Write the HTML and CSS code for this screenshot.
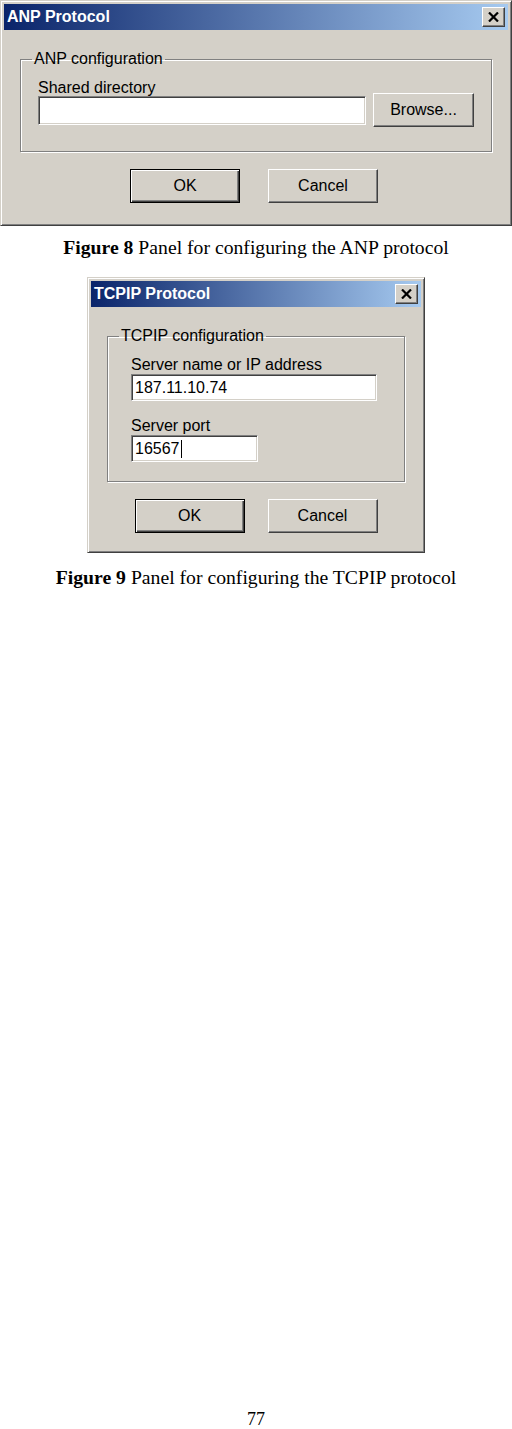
FILE: index.html
```html
<!DOCTYPE html>
<html>
<head>
<meta charset="utf-8">
<link rel="stylesheet" href="styles.css">
</head>
<body>
<div class="page">
  <div class="dialog dlg-anp">
    <div class="titlebar">
      <span class="title">ANP Protocol</span>
      <span class="close"><svg width="11" height="10" viewBox="0 0 11 10"><path d="M1 0.5 L10 9.5 M10 0.5 L1 9.5" stroke="#000" stroke-width="2.2" fill="none"/></svg></span>
    </div>
    <div class="body">
      <fieldset class="group">
        <legend>ANP configuration</legend>
        <div class="group-inner group-anp">
          <div class="label label-dir">Shared directory</div>
          <div class="row">
            <div class="input input-dir"></div>
            <div class="btn btn-browse">Browse...</div>
          </div>
        </div>
      </fieldset>
      <div class="buttons buttons-anp">
        <div class="btn btn-default">OK</div>
        <div class="btn">Cancel</div>
      </div>
    </div>
  </div>
  <p class="caption caption-8"><b>Figure 8</b> Panel for configuring the ANP protocol</p>

  <div class="dialog dlg-tcp">
    <div class="titlebar">
      <span class="title">TCPIP Protocol</span>
      <span class="close"><svg width="11" height="10" viewBox="0 0 11 10"><path d="M1 0.5 L10 9.5 M10 0.5 L1 9.5" stroke="#000" stroke-width="2.2" fill="none"/></svg></span>
    </div>
    <div class="body">
      <fieldset class="group">
        <legend>TCPIP configuration</legend>
        <div class="group-inner group-tcp">
          <div class="label">Server name or IP address</div>
          <div class="input input-host">187.11.10.74</div>
          <div class="label label-port">Server port</div>
          <div class="input input-port">16567<span class="caret"></span></div>
        </div>
      </fieldset>
      <div class="buttons buttons-tcp">
        <div class="btn btn-default">OK</div>
        <div class="btn">Cancel</div>
      </div>
    </div>
  </div>
  <p class="caption caption-9"><b>Figure 9</b> Panel for configuring the TCPIP protocol</p>

  <div class="pagenum">77</div>
</div>
</body>
</html>
```

FILE: styles.css
```css
html, body {
  margin: 0;
  padding: 0;
  background: #fff;
}
.page {
  height: 1429px;
  display: flex;
  flex-direction: column;
  overflow: hidden;
}
.dialog {
  box-sizing: border-box;
  background: #d4d0c8;
  border: 1px solid;
  border-color: #d4d0c8 #404040 #404040 #d4d0c8;
  box-shadow: inset 1px 1px 0 #fff, inset -1px -1px 0 #808080;
  padding: 3px;
  font-family: "Liberation Sans", Arial, sans-serif;
  font-size: 16px;
  color: #000;
}
.dlg-anp {
  width: 512px;
  height: 226px;
}
.dlg-tcp {
  width: 338px;
  height: 276px;
  margin: 19px auto 0 auto;
}
.titlebar {
  height: 26px;
  background: linear-gradient(to right, #0a246a, #a6caf0);
  display: flex;
  align-items: center;
  justify-content: space-between;
  padding: 0 3px 0 3px;
}
.title {
  color: #fff;
  font-weight: bold;
  font-size: 16px;
}
.close {
  box-sizing: border-box;
  width: 23px;
  height: 20px;
  background: #d4d0c8;
  border: 1px solid;
  border-color: #fff #404040 #404040 #fff;
  box-shadow: inset -1px -1px 0 #808080;
  display: flex;
  align-items: center;
  justify-content: center;
}
.body {
  padding: 20px 16px 0 16px;
}
.group {
  margin: 0;
  padding: 0;
  border: 1px solid #808080;
  box-shadow: inset 1px 1px 0 #fff, 1px 1px 0 #fff;
  min-width: 0;
}
.group legend {
  margin-left: 11px;
  padding: 0 2px;
  line-height: 18px;
}
.group-anp {
  padding: 12px 15px 24px 17px;
}
.label {
  line-height: 16px;
  height: 16px;
}
.label-dir {
  height: 13px;
}
.row {
  display: flex;
  align-items: center;
  gap: 7px;
}
.input {
  box-sizing: border-box;
  background: #fff;
  border: 1px solid;
  border-color: #808080 #fff #fff #808080;
  box-shadow: inset 1px 1px 0 #404040, inset -1px -1px 0 #d4d0c8;
  padding: 0 3px;
  display: flex;
  align-items: center;
}
.input-dir {
  width: 328px;
  height: 29px;
}
.btn {
  box-sizing: border-box;
  width: 110px;
  height: 34px;
  background: #d4d0c8;
  border: 1px solid;
  border-color: #fff #404040 #404040 #fff;
  box-shadow: inset -1px -1px 0 #808080;
  display: flex;
  align-items: center;
  justify-content: center;
}
.btn-browse {
  width: 101px;
}
.btn-default {
  border: 1px solid #000;
  box-shadow: inset 1px 1px 0 #fff, inset -1px -1px 0 #404040, inset -2px -2px 0 #808080;
}
.buttons {
  display: flex;
  justify-content: center;
  gap: 28px;
  margin-top: 17px;
}
.buttons-anp {
  padding-right: 4px;
}
.group-tcp {
  padding: 12px 20px 19px 23px;
}
.input-host {
  width: 246px;
  height: 27px;
  margin-top: 1px;
}
.label-port {
  margin-top: 16px;
  line-height: 17px;
  height: 17px;
}
.input-port {
  width: 127px;
  height: 27px;
  margin-top: 1px;
}
.caret {
  display: inline-block;
  width: 1px;
  height: 18px;
  background: #000;
  margin-left: 1px;
}
.buttons-tcp {
  gap: 23px;
  margin-top: 17px;
}
.caption {
  margin: 10px 0 0 0;
  text-align: center;
  font-family: "Liberation Serif", "Times New Roman", serif;
  font-size: 19.7px;
  line-height: 22px;
  color: #000;
}
.caption-9 {
  margin-top: 13px;
}
.pagenum {
  margin-top: auto;
  text-align: center;
  font-family: "Liberation Serif", "Times New Roman", serif;
  font-size: 18px;
  line-height: 19px;
  height: 19px;
}
```
